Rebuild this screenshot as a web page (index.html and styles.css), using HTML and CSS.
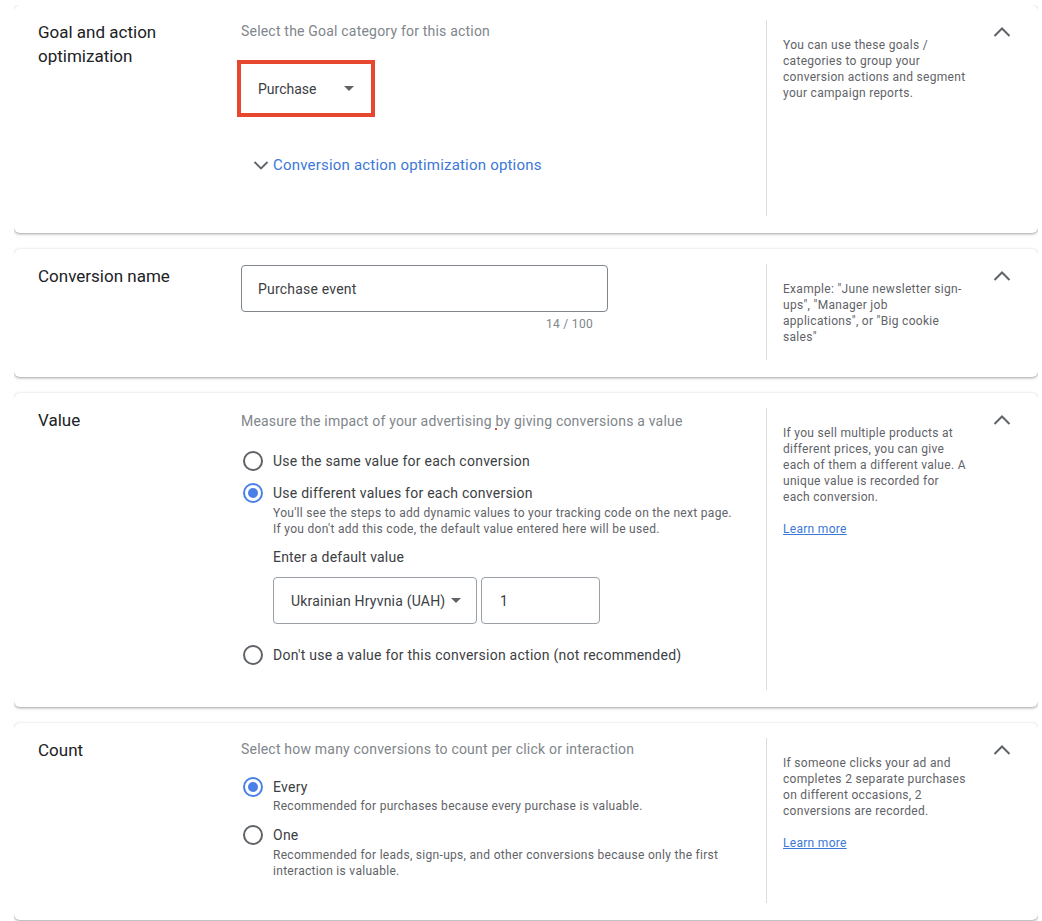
FILE: index.html
```html
<!DOCTYPE html>
<html lang="en">
<head>
    <meta charset="UTF-8">
    <meta name="viewport" content="width=device-width, initial-scale=1.0">
    <title>Conversion action settings</title>
    <link rel="stylesheet" href="styles.css">
</head>
<body>
    <!-- goal category -->
    <div class="card">
        <div class="card-title">Goal and action optimization</div>
        <div class="card-main main-goal">
            <p class="hint">Select the Goal category for this action</p>
            <div class="highlight">
                <div class="select select-goal">
                    <span>Purchase</span>
                    <span class="caret"></span>
                </div>
            </div>
            <a class="expand-link" href="#">
                <svg width="16" height="16" viewBox="0 0 16 16"><polyline points="1.5,5 8,11.5 14.5,5" fill="none" stroke="#5f6368" stroke-width="1.8"/></svg>
                Conversion action optimization options
            </a>
        </div>
        <div class="card-aside">
            <p>You can use these goals / categories to group your conversion actions and segment your campaign reports.</p>
        </div>
        <button class="toggle"><svg width="24" height="24" viewBox="0 0 24 24"><polyline points="4.5,16 12,8.5 19.5,16" fill="none" stroke="#5f6368" stroke-width="2"/></svg></button>
    </div>

    <!-- conversion name -->
    <div class="card">
        <div class="card-title">Conversion name</div>
        <div class="card-main main-name">
            <div class="text-field">Purchase event</div>
            <div class="counter">14 / 100</div>
        </div>
        <div class="card-aside">
            <p>Example: "June newsletter sign-ups", "Manager job<br>applications", or "Big cookie sales"</p>
        </div>
        <button class="toggle"><svg width="24" height="24" viewBox="0 0 24 24"><polyline points="4.5,16 12,8.5 19.5,16" fill="none" stroke="#5f6368" stroke-width="2"/></svg></button>
    </div>

    <!-- value -->
    <div class="card">
        <div class="card-title">Value</div>
        <div class="card-main main-value">
            <p class="hint">Measure the impact of your advertising <span class="typo">b</span>y giving conversions a value</p>
            <div class="options">
                <div class="option">
                    <div class="option-row"><span class="radio"></span>Use the same value for each conversion</div>
                </div>
                <div class="option">
                    <div class="option-row"><span class="radio checked"></span>Use different values for each conversion</div>
                    <p class="option-desc">You'll see the steps to add dynamic values to your tracking code on the next page.<br>If you don't add this code, the default value entered here will be used.</p>
                    <div class="default-value">
                        <div class="default-label">Enter a default value</div>
                        <div class="value-fields">
                            <div class="select select-currency">
                                <span>Ukrainian Hryvnia (UAH)</span>
                                <span class="caret"></span>
                            </div>
                            <div class="select select-amount">1</div>
                        </div>
                    </div>
                </div>
                <div class="option option-last">
                    <div class="option-row"><span class="radio"></span>Don't use a value for this conversion action (not recommended)</div>
                </div>
            </div>
        </div>
        <div class="card-aside">
            <p>If you sell multiple products at different prices, you can give each of them a different value. A unique value is recorded for each conversion.</p>
            <a class="learn-more" href="#">Learn more</a>
        </div>
        <button class="toggle"><svg width="24" height="24" viewBox="0 0 24 24"><polyline points="4.5,16 12,8.5 19.5,16" fill="none" stroke="#5f6368" stroke-width="2"/></svg></button>
    </div>

    <!-- count -->
    <div class="card">
        <div class="card-title">Count</div>
        <div class="card-main">
            <p class="hint">Select how many conversions to count per click or interaction</p>
            <div class="options options-count">
                <div class="option">
                    <div class="option-row"><span class="radio checked"></span>Every</div>
                    <p class="option-desc">Recommended for purchases because every purchase is valuable.</p>
                </div>
                <div class="option">
                    <div class="option-row"><span class="radio"></span>One</div>
                    <p class="option-desc">Recommended for leads, sign-ups, and other conversions because only the first<br>interaction is valuable.</p>
                </div>
            </div>
        </div>
        <div class="card-aside">
            <p>If someone clicks your ad and completes 2 separate purchases on different occasions, 2 conversions are recorded.</p>
            <a class="learn-more" href="#">Learn more</a>
        </div>
        <button class="toggle"><svg width="24" height="24" viewBox="0 0 24 24"><polyline points="4.5,16 12,8.5 19.5,16" fill="none" stroke="#5f6368" stroke-width="2"/></svg></button>
    </div>
</body>
</html>
```

FILE: styles.css
```css
body {
    margin: 5px 4px 0 14px;
    background: #fff;
    font-family: Roboto, 'Liberation Sans', Arial, sans-serif;
    color: #3c4043;
}

p {
    margin: 0;
}

.card {
    display: flex;
    background: #fff;
    border-radius: 6px;
    box-shadow: 0 1px 2px 0 rgba(60, 64, 67, .3), 0 1px 3px 1px rgba(60, 64, 67, .15);
    padding: 15px 24px 17px 24px;
    margin-bottom: 16px;
}

.card-title {
    width: 203px;
    flex: none;
    font-size: 17px;
    line-height: 24px;
    color: #202124;
}

.card-main {
    flex: 1;
    padding: 1px 0 24px;
}

.card-aside {
    width: 185px;
    flex: none;
    border-left: 1px solid #dadce0;
    padding: 17px 22px 15px 16px;
    font-size: 12px;
    line-height: 16px;
    letter-spacing: .3px;
    color: #5f6368;
}

.toggle {
    width: 24px;
    height: 24px;
    flex: none;
    padding: 0;
    border: 0;
    background: none;
    cursor: pointer;
}

.toggle svg {
    display: block;
}

.hint {
    font-size: 14px;
    line-height: 20px;
    letter-spacing: .2px;
    color: #80868b;
}

.typo {
    position: relative;
}

.typo::after {
    content: '';
    position: absolute;
    left: 0;
    bottom: -1px;
    width: 2px;
    height: 2px;
    background: #e8472f;
}

/* goal card */
.main-goal {
    padding-bottom: 41px;
}

.highlight {
    display: inline-block;
    margin: 19px 0 0 -4px;
    border: 4px solid #e8472f;
}

.select {
    display: flex;
    align-items: center;
    justify-content: space-between;
    box-sizing: border-box;
    height: 47px;
    padding: 0 17px;
    font-size: 14px;
    color: #3c4043;
    background: #fff;
}

.select-goal {
    width: 130px;
    height: 49px;
}

.caret {
    width: 0;
    height: 0;
    border-left: 5px solid transparent;
    border-right: 5px solid transparent;
    border-top: 5px solid #5f6368;
}

.expand-link {
    display: flex;
    align-items: center;
    gap: 4px;
    margin: 38px 0 0 12px;
    font-size: 15px;
    line-height: 20px;
    letter-spacing: .2px;
    color: #3b78d8;
    text-decoration: none;
}

.expand-link svg {
    display: block;
}

/* name card */
.main-name {
    padding-bottom: 0;
}

.text-field {
    box-sizing: border-box;
    width: 367px;
    height: 47px;
    border: 1px solid #80868b;
    border-radius: 4px;
    padding: 0 16px;
    line-height: 46px;
    font-size: 14px;
    letter-spacing: .2px;
    color: #3c4043;
}

.counter {
    width: 367px;
    box-sizing: border-box;
    padding-right: 15px;
    margin-top: 4px;
    text-align: right;
    font-size: 12px;
    line-height: 16px;
    letter-spacing: .3px;
    color: #80868b;
}

/* value card */
.main-value {
    padding-top: 3px;
    padding-bottom: 25px;
}

/* radio groups */
.options {
    margin-top: 20px;
    display: flex;
    flex-direction: column;
    gap: 12px;
}

.options-count {
    margin-top: 18px;
    gap: 11px;
}

.option-row {
    display: flex;
    align-items: center;
    gap: 10px;
    margin-left: 2px;
    font-size: 14px;
    line-height: 20px;
    letter-spacing: .25px;
    color: #3c4043;
}

.radio {
    box-sizing: border-box;
    width: 20px;
    height: 20px;
    border: 2px solid #5f6368;
    border-radius: 50%;
    flex: none;
    position: relative;
}

.radio.checked {
    border-color: #4a80e8;
}

.radio.checked::after {
    content: '';
    position: absolute;
    left: 3px;
    top: 3px;
    width: 10px;
    height: 10px;
    border-radius: 50%;
    background: #4a80e8;
}

.option-desc {
    margin: 2px 0 0 32px;
    font-size: 12px;
    line-height: 16px;
    letter-spacing: .3px;
    color: #5f6368;
}

.options-count .option-desc {
    margin-top: 1px;
}

.options-count .option + .option .option-desc {
    margin-top: 2px;
}

.default-value {
    margin: 10px 0 0 32px;
}

.default-label {
    font-size: 14px;
    line-height: 20px;
    letter-spacing: .2px;
    color: #3c4043;
}

.value-fields {
    display: flex;
    gap: 4px;
    margin-top: 10px;
}

.value-fields .select {
    border: 1px solid #9aa0a6;
    border-radius: 4px;
    letter-spacing: .2px;
}

.select-currency {
    width: 204px;
    padding-right: 15px;
}

.select-amount {
    width: 119px;
    padding-left: 18px;
}

.option-last {
    margin-top: 9px;
}

.learn-more {
    display: inline-block;
    margin-top: 16px;
    color: #3b78d8;
    text-decoration: underline;
}
```
